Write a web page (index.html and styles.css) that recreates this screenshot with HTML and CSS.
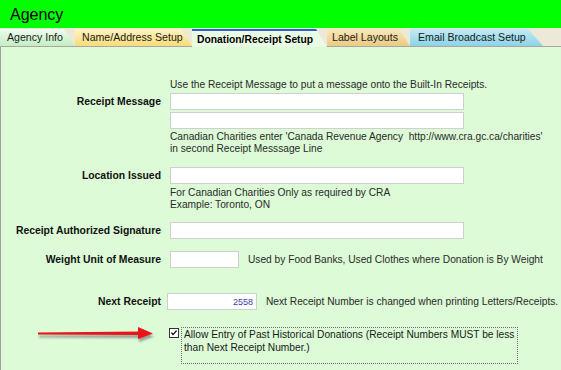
FILE: index.html
```html
<!DOCTYPE html>
<html lang="en">
<head>
    <meta charset="UTF-8">
    <meta name="viewport" content="width=device-width, initial-scale=1.0">
    <title>Agency</title>
    <link rel="stylesheet" href="styles.css">
</head>
<body>
<div class="header">Agency</div>

<div class="tabs">
    <div class="tab tab-info">Agency Info</div>
    <div class="tab tab-name">Name/Address Setup</div>
    <div class="tab tab-active">Donation/Receipt Setup</div>
    <div class="tab tab-label">Label Layouts</div>
    <div class="tab tab-email">Email Broadcast Setup</div>
</div>

<div class="panel">
    <div class="row row-intro">
        <div class="label"></div>
        <div class="field">
            <p class="note">Use the Receipt Message to put a message onto the Built-In Receipts.</p>
        </div>
    </div>

    <div class="row row-message">
        <div class="label">Receipt Message</div>
        <div class="field">
            <input type="text" class="text-input">
            <input type="text" class="text-input second">
            <p class="note under">Canadian Charities enter 'Canada Revenue Agency&nbsp; http://www.cra.gc.ca/charities'<br>in second Receipt Messsage Line</p>
        </div>
    </div>

    <div class="row row-location">
        <div class="label">Location Issued</div>
        <div class="field">
            <input type="text" class="text-input">
            <p class="note under-loc">For Canadian Charities Only as required by CRA<br>Example: Toronto, ON</p>
        </div>
    </div>

    <div class="row row-signature">
        <div class="label">Receipt Authorized Signature</div>
        <div class="field">
            <input type="text" class="text-input">
        </div>
    </div>

    <div class="row row-weight">
        <div class="label">Weight Unit of Measure</div>
        <div class="field inline">
            <input type="text" class="text-input short">
            <span class="note">Used by Food Banks, Used Clothes where Donation is By Weight</span>
        </div>
    </div>

    <div class="row row-next">
        <div class="label">Next Receipt</div>
        <div class="field inline next">
            <input type="text" class="text-input number" value="2558">
            <span class="note">Next Receipt Number is changed when printing Letters/Receipts.</span>
        </div>
    </div>

    <div class="row row-check">
        <div class="label"></div>
        <div class="field inline check">
            <svg class="checkbox" width="10" height="10" viewBox="0 0 10 10">
                <rect x="0.5" y="0.5" width="9" height="9" fill="#fff" stroke="#333"/>
                <path d="M2.4 4.6 L4 6.6 L7.6 2.6" fill="none" stroke="#000" stroke-width="1.3"/>
            </svg>
            <div class="check-box">Allow Entry of Past Historical Donations (Receipt Numbers MUST be less than Next Receipt Number.)</div>
        </div>
    </div>

    <!-- annotation arrow pointing at the checkbox -->
    <svg class="arrow" width="124" height="22" viewBox="0 0 124 22">
        <defs>
            <filter id="shade" x="-10%" y="-50%" width="120%" height="200%">
                <feGaussianBlur stdDeviation="1.2"/>
            </filter>
        </defs>
        <g fill="#7a7a7a" opacity="0.7" filter="url(#shade)" transform="translate(1,3)">
            <polygon points="3,8.5 106,7.5 106,11 3,10.5"/>
            <polygon points="103,3 118,9.5 103,15"/>
        </g>
        <g fill="#e8141a">
            <polygon points="3,8.5 106,7.5 106,11 3,10.5"/>
            <polygon points="103,3 118,9.5 103,15"/>
        </g>
    </svg>
</div>
</body>
</html>
```

FILE: styles.css
```css
body {
    margin: 0;
    padding: 0;
    font-family: "Liberation Sans", Arial, sans-serif;
    background-color: #dcfbd6;
    overflow: hidden;
    height: 370px;
}

.header {
    height: 28px;
    background-color: #00ff00;
    font-size: 16px;
    line-height: 29px;
    padding-left: 10px;
    color: #000;
}

.tabs {
    display: flex;
    align-items: flex-end;
    height: 18px;
    background-color: #ece9d8;
    border-bottom: 1px solid #a8a8a0;
}

.tab {
    height: 17px;
    line-height: 17px;
    font-size: 10.6px;
    color: #1a1a1a;
    padding: 0 14px 0 7px;
    box-sizing: border-box;
    clip-path: polygon(0 0, calc(100% - 11px) 0, 100% 100%, 0 100%);
    white-space: nowrap;
}

.tab-info {
    width: 75px;
    background: linear-gradient(to bottom, #eefbee, #c4eec4);
}

.tab-name {
    width: 117px;
    background: linear-gradient(to bottom, #fff3c0, #f8dc7a);
}

.tab-active {
    width: 135px;
    height: 18px;
    margin-bottom: -1px;
    padding-left: 5px;
    line-height: 18px;
    font-size: 10.3px;
    font-weight: bold;
    color: #000;
    background-color: #e8fde4;
    border-top: 2px solid #2f5fc8;
}

.tab-label {
    width: 83px;
    padding-left: 5px;
    background: linear-gradient(to bottom, #fbe8b8, #ebcb84);
}

.tab-email {
    width: 133px;
    padding-left: 8px;
    background: linear-gradient(to bottom, #c0ecf6, #8ed2e6);
    clip-path: polygon(0 0, calc(100% - 15px) 0, 100% 100%, 0 100%);
}

.panel {
    position: relative;
    height: 323px;
    border-left: 1px solid #a0a0a0;
    background-color: #dcfbd6;
    padding-top: 32px;
    box-sizing: border-box;
}

.row {
    display: flex;
    align-items: flex-start;
}

.label {
    width: 160px;
    padding-right: 9px;
    text-align: right;
    font-size: 10.4px;
    font-weight: bold;
    line-height: 17px;
    color: #111;
    white-space: nowrap;
}

.field {
    flex: 1;
}

.field.inline {
    display: flex;
    align-items: center;
}

.note {
    margin: 0;
    font-size: 10.2px;
    line-height: 12px;
    color: #2a2a2a;
    white-space: nowrap;
}

.text-input {
    display: block;
    width: 294px;
    height: 17px;
    box-sizing: border-box;
    margin: 0;
    padding: 0 3px;
    border: 1px solid #cfcfcf;
    background-color: #fff;
    font-family: "Liberation Sans", Arial, sans-serif;
}

.text-input.second {
    margin-top: 2px;
}

.text-input.short {
    width: 69px;
    margin-right: 9px;
}

.text-input.number {
    width: 90px;
    margin-left: -3px;
    margin-right: 9px;
    text-align: right;
    font-size: 9px;
    color: #3a3aa0;
}

.note.under {
    margin-top: 2px;
}

.note.under-loc {
    margin-top: 3px;
}

.row-message {
    margin-top: 2px;
}

.row-location {
    margin-top: 12px;
}

.row-signature {
    margin-top: 11px;
}

.row-weight {
    margin-top: 12px;
}

.row-next {
    margin-top: 25px;
}

.row-check {
    margin-top: 17px;
}

.field.check {
    align-items: flex-start;
}

.checkbox {
    margin: 1px 2px 0 -1px;
    flex: none;
}

.check-box {
    width: 337px;
    height: 37px;
    box-sizing: border-box;
    border: 1px dotted #707070;
    padding: 0 2px;
    font-size: 10.2px;
    line-height: 13px;
    color: #1a1a1a;
}

.arrow {
    position: absolute;
    left: 34px;
    top: 277px;
}
```
